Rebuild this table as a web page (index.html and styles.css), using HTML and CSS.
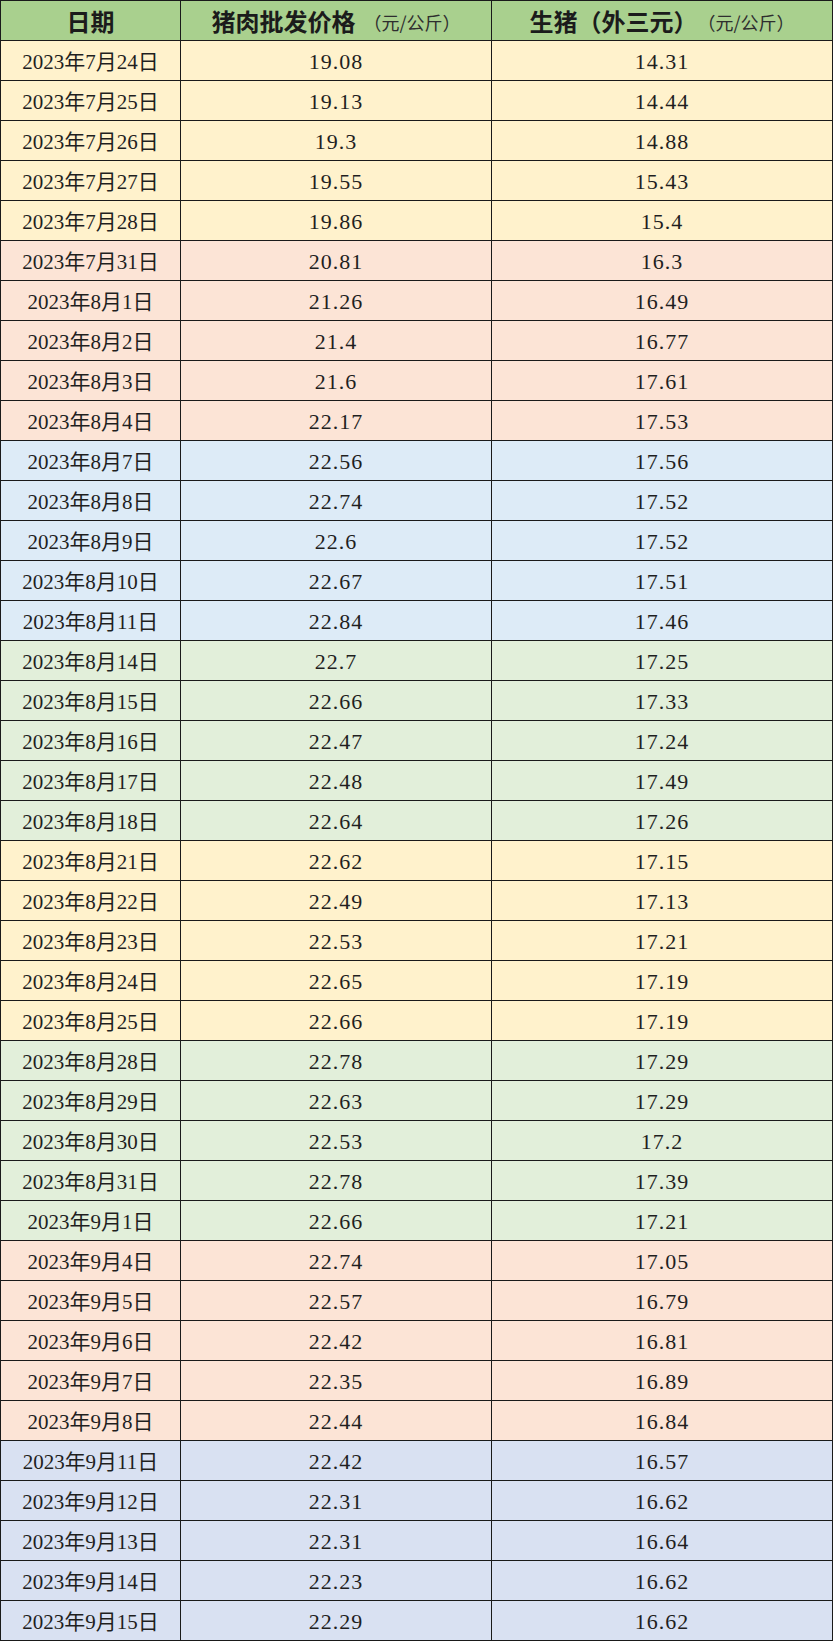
FILE: index.html
```html
<!DOCTYPE html>
<html lang="zh-CN">
<head>
<meta charset="utf-8">
<title>猪肉批发价格</title>
<link rel="stylesheet" href="styles.css">
</head>
<body>
<div class="sheet">
  <div class="row head">
    <div class="cell">日期</div>
    <div class="cell">猪肉批发价格<span class="unit gap">（元/公斤）</span></div>
    <div class="cell">生猪（外三元）<span class="unit">（元/公斤）</span></div>
  </div>
  <div class="row y"><div class="cell d">2023年7月24日</div><div class="cell n">19.08</div><div class="cell n">14.31</div></div>
  <div class="row y"><div class="cell d">2023年7月25日</div><div class="cell n">19.13</div><div class="cell n">14.44</div></div>
  <div class="row y"><div class="cell d">2023年7月26日</div><div class="cell n">19.3</div><div class="cell n">14.88</div></div>
  <div class="row y"><div class="cell d">2023年7月27日</div><div class="cell n">19.55</div><div class="cell n">15.43</div></div>
  <div class="row y"><div class="cell d">2023年7月28日</div><div class="cell n">19.86</div><div class="cell n">15.4</div></div>
  <div class="row p"><div class="cell d">2023年7月31日</div><div class="cell n">20.81</div><div class="cell n">16.3</div></div>
  <div class="row p"><div class="cell d">2023年8月1日</div><div class="cell n">21.26</div><div class="cell n">16.49</div></div>
  <div class="row p"><div class="cell d">2023年8月2日</div><div class="cell n">21.4</div><div class="cell n">16.77</div></div>
  <div class="row p"><div class="cell d">2023年8月3日</div><div class="cell n">21.6</div><div class="cell n">17.61</div></div>
  <div class="row p"><div class="cell d">2023年8月4日</div><div class="cell n">22.17</div><div class="cell n">17.53</div></div>
  <div class="row b"><div class="cell d">2023年8月7日</div><div class="cell n">22.56</div><div class="cell n">17.56</div></div>
  <div class="row b"><div class="cell d">2023年8月8日</div><div class="cell n">22.74</div><div class="cell n">17.52</div></div>
  <div class="row b"><div class="cell d">2023年8月9日</div><div class="cell n">22.6</div><div class="cell n">17.52</div></div>
  <div class="row b"><div class="cell d">2023年8月10日</div><div class="cell n">22.67</div><div class="cell n">17.51</div></div>
  <div class="row b"><div class="cell d">2023年8月11日</div><div class="cell n">22.84</div><div class="cell n">17.46</div></div>
  <div class="row g"><div class="cell d">2023年8月14日</div><div class="cell n">22.7</div><div class="cell n">17.25</div></div>
  <div class="row g"><div class="cell d">2023年8月15日</div><div class="cell n">22.66</div><div class="cell n">17.33</div></div>
  <div class="row g"><div class="cell d">2023年8月16日</div><div class="cell n">22.47</div><div class="cell n">17.24</div></div>
  <div class="row g"><div class="cell d">2023年8月17日</div><div class="cell n">22.48</div><div class="cell n">17.49</div></div>
  <div class="row g"><div class="cell d">2023年8月18日</div><div class="cell n">22.64</div><div class="cell n">17.26</div></div>
  <div class="row y"><div class="cell d">2023年8月21日</div><div class="cell n">22.62</div><div class="cell n">17.15</div></div>
  <div class="row y"><div class="cell d">2023年8月22日</div><div class="cell n">22.49</div><div class="cell n">17.13</div></div>
  <div class="row y"><div class="cell d">2023年8月23日</div><div class="cell n">22.53</div><div class="cell n">17.21</div></div>
  <div class="row y"><div class="cell d">2023年8月24日</div><div class="cell n">22.65</div><div class="cell n">17.19</div></div>
  <div class="row y"><div class="cell d">2023年8月25日</div><div class="cell n">22.66</div><div class="cell n">17.19</div></div>
  <div class="row g"><div class="cell d">2023年8月28日</div><div class="cell n">22.78</div><div class="cell n">17.29</div></div>
  <div class="row g"><div class="cell d">2023年8月29日</div><div class="cell n">22.63</div><div class="cell n">17.29</div></div>
  <div class="row g"><div class="cell d">2023年8月30日</div><div class="cell n">22.53</div><div class="cell n">17.2</div></div>
  <div class="row g"><div class="cell d">2023年8月31日</div><div class="cell n">22.78</div><div class="cell n">17.39</div></div>
  <div class="row g"><div class="cell d">2023年9月1日</div><div class="cell n">22.66</div><div class="cell n">17.21</div></div>
  <div class="row p"><div class="cell d">2023年9月4日</div><div class="cell n">22.74</div><div class="cell n">17.05</div></div>
  <div class="row p"><div class="cell d">2023年9月5日</div><div class="cell n">22.57</div><div class="cell n">16.79</div></div>
  <div class="row p"><div class="cell d">2023年9月6日</div><div class="cell n">22.42</div><div class="cell n">16.81</div></div>
  <div class="row p"><div class="cell d">2023年9月7日</div><div class="cell n">22.35</div><div class="cell n">16.89</div></div>
  <div class="row p"><div class="cell d">2023年9月8日</div><div class="cell n">22.44</div><div class="cell n">16.84</div></div>
  <div class="row l"><div class="cell d">2023年9月11日</div><div class="cell n">22.42</div><div class="cell n">16.57</div></div>
  <div class="row l"><div class="cell d">2023年9月12日</div><div class="cell n">22.31</div><div class="cell n">16.62</div></div>
  <div class="row l"><div class="cell d">2023年9月13日</div><div class="cell n">22.31</div><div class="cell n">16.64</div></div>
  <div class="row l"><div class="cell d">2023年9月14日</div><div class="cell n">22.23</div><div class="cell n">16.62</div></div>
  <div class="row l"><div class="cell d">2023年9月15日</div><div class="cell n">22.29</div><div class="cell n">16.62</div></div>
</div>
</body>
</html>
```

FILE: styles.css
```css
html, body {
  margin: 0;
  padding: 0;
  background: #ffffff;
}

.sheet {
  width: 833px;
  box-sizing: border-box;
  padding: 1px;
  background: #1a1a1a;
  display: flex;
  flex-direction: column;
  gap: 1px;
}

.row {
  display: grid;
  grid-template-columns: 179px 310px 340px;
  gap: 1px;
  height: 39px;
}

.cell {
  display: flex;
  align-items: center;
  justify-content: center;
  padding-top: 3px;
  box-sizing: border-box;
  font-family: "Liberation Serif", "Noto Sans CJK SC", serif;
  font-size: 21px;
  color: #1f1f1f;
  white-space: nowrap;
  line-height: 1;
}

.cell.n {
  font-size: 22px;
  letter-spacing: 1px;
}

.head .cell {
  background: #a9d08e;
  font-family: "Noto Sans CJK SC", sans-serif;
  font-weight: 700;
  font-size: 24px;
  color: #1b1b1b;
  padding-top: 0;
}

.unit {
  font-weight: 400;
  font-size: 18px;
  color: #2e2e2e;
  padding-top: 2px;
}

.unit.gap {
  margin-left: 8px;
}

.y .cell { background: #fff2cc; }
.p .cell { background: #fce4d6; }
.b .cell { background: #ddebf7; }
.g .cell { background: #e2efda; }
.l .cell { background: #d9e1f2; }
```
